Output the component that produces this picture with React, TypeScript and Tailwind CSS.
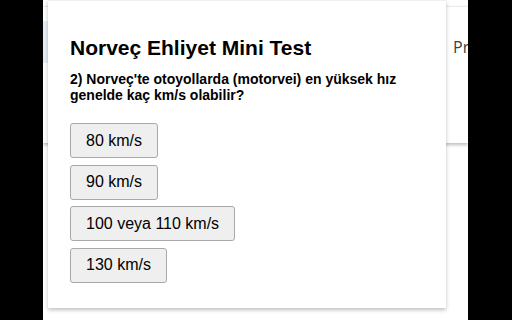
import React from "react";

const answers = ["80 km/s", "90 km/s", "100 veya 110 km/s", "130 km/s"];

export default function App() {
  return (
    <div className="w-[512px] h-[320px] flex bg-black overflow-hidden font-['Liberation_Sans',Arial,sans-serif]">
      <div className="w-[43px] shrink-0 bg-black" />

      {/* page behind the popup */}
      <div className="relative flex-1 bg-white">
        <div className="mt-[6px] h-[137px] flex border-t border-[#e8eaed] shadow-[0_2px_3px_rgba(0,0,0,0.25)]">
          <div className="w-[5px] flex flex-col">
            <div className="mt-[14px] h-[42px] bg-[#e8eef6]" />
          </div>
          <div className="flex-1" />
          <div className="w-[15px] pt-[28px] text-[16px] text-[#3c4043] font-['Open_Sans',sans-serif] overflow-hidden whitespace-nowrap">
            Pr
          </div>
        </div>

        {/* popup */}
        <div className="absolute left-[5px] top-0 w-[398px] h-[308px] bg-white border-t border-[#f0f0f0] shadow-[0_2px_4px_rgba(0,0,0,0.25)] pt-[35px] px-[22px] text-black">
          <h1 className="text-[21px] leading-[23px] font-bold">Norveç Ehliyet Mini Test</h1>
          <p className="mt-[12px] text-[14px] leading-[16px] font-bold">
            2) Norveç'te otoyollarda (motorvei) en yüksek hız genelde kaç km/s olabilir?
          </p>
          <div className="mt-[20px] flex flex-col items-start gap-[6.5px]">
            {answers.map((a) => (
              <button
                key={a}
                className="h-[35px] px-[15px] text-[16px] leading-[18px] bg-[#efefef] border border-[#a9a9a9] rounded-[3px] text-black"
              >
                {a}
              </button>
            ))}
          </div>
        </div>
      </div>

      <div className="w-[44px] shrink-0 bg-black" />
    </div>
  );
}
